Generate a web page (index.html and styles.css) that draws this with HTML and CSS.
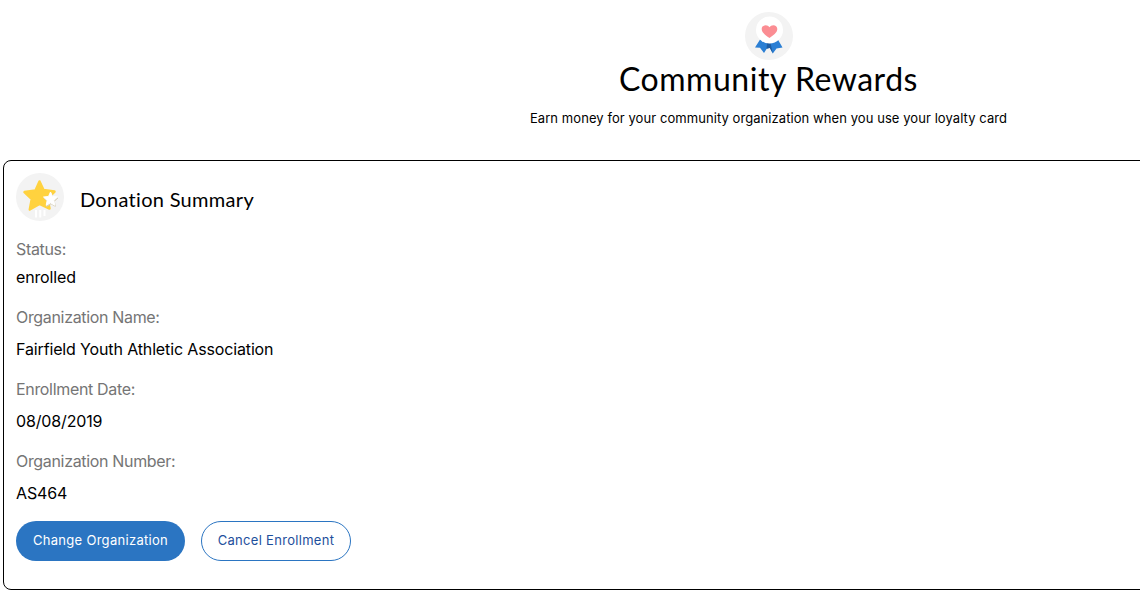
FILE: index.html
```html
<!DOCTYPE html>
<html lang="en">
<head>
<meta charset="utf-8">
<title>Community Rewards</title>
<link rel="stylesheet" href="styles.css">
</head>
<body>
<header class="hero">
  <svg class="badge" width="48" height="48" viewBox="0 0 48 48" aria-hidden="true">
    <circle cx="24" cy="24" r="24" fill="#f3f3f3"/>
    <path d="M16 26 L10 35.500 L15 35.800 L19 41 L22.500 35.500 L24.800 35.500 L27.800 41.500 L31.500 36.500 L37.500 35.500 L32 26 Z" fill="#2b7fd4"/>
    <path d="M22 31 L25.500 31 L27.800 41.500 L24.800 36 L21.500 37 Z" fill="#1d5ca3"/>
    <circle cx="24.500" cy="18" r="13.500" fill="#fff"/>
    <path d="M24.500 26 C21 23.500 16.700 20.800 16.700 17 C16.700 14.800 18.500 13.200 20.700 13.200 C22.300 13.200 23.700 14 24.500 15.300 C25.300 14 26.700 13.200 28.300 13.200 C30.500 13.200 32.300 14.800 32.300 17 C32.300 20.800 28 23.500 24.500 26 Z" fill="#fb8d93"/>
  </svg>
  <h1 class="hero-title">Community Rewards</h1>
  <p class="hero-sub">Earn money for your community organization when you use your loyalty card</p>
</header>
<section class="card">
  <div class="card-head">
    <svg class="badge" width="48" height="48" viewBox="0 0 48 48" aria-hidden="true">
      <circle cx="24" cy="24" r="24" fill="#f3f3f3"/>
      <path d="M20 37 V44.500 M24.300 37 V44.500 M28.500 37 V43" stroke="#fff" stroke-width="2" fill="none"/>
      <path d="M23.500 8.500 L27.500 17 L38.500 18.500 L31.500 25.500 L33.500 35.500 L23.500 30.800 L13.800 36.500 L15.800 26 L8.500 19 L19.500 17.500 Z" fill="#ffd23f" stroke="#ffd23f" stroke-width="2.500" stroke-linejoin="round"/>
      <path d="M35 20 L37 24.500 L42 25 L38.300 28.300 L39.300 33.300 L35 30.800 L30.700 33.300 L31.700 28.300 L28 25 L33 24.500 Z" fill="#d9d2bd" stroke="#d9d2bd" stroke-linejoin="round"/>
      <path d="M34.500 19 L36.500 23.500 L41.500 24 L37.800 27.300 L38.800 32.300 L34.500 29.800 L30.200 32.300 L31.200 27.300 L27.500 24 L32.500 23.500 Z" fill="#fff" stroke="#fff" stroke-linejoin="round"/>
    </svg>
    <h2 class="card-title">Donation Summary</h2>
  </div>
  <dl class="fields">
    <dt class="label">Status:</dt>
    <dd class="value value-first">enrolled</dd>
    <dt class="label">Organization Name:</dt>
    <dd class="value">Fairfield Youth Athletic Association</dd>
    <dt class="label">Enrollment Date:</dt>
    <dd class="value">08/08/2019</dd>
    <dt class="label">Organization Number:</dt>
    <dd class="value">AS464</dd>
  </dl>
  <div class="actions">
    <button class="btn btn-primary" type="button">Change Organization</button>
    <button class="btn btn-outline" type="button">Cancel Enrollment</button>
  </div>
</section>
</body>
</html>
```
FILE: styles.css
```css
html, body {
  margin: 0;
  padding: 0;
  height: 616px;
  overflow: hidden;
  background: #fff;
  font-family: Inter, "Liberation Sans", sans-serif;
  color: #000;
}
.hero {
  display: flex;
  flex-direction: column;
  align-items: center;
  box-sizing: border-box;
  height: 160px;
  padding: 12px 0 0 397px;
}
.badge {
  display: block;
  flex: none;
}
.hero-title {
  margin: -1px 0 0;
  font-family: Lato, "Noto Sans", sans-serif;
  font-size: 32px;
  font-weight: 400;
  line-height: 40px;
  letter-spacing: 0.53px;
  font-variant-ligatures: none;
}
.hero-sub {
  margin: 9px 0 0;
  font-size: 13px;
  line-height: 20px;
  letter-spacing: 0.07px;
}
.card {
  box-sizing: border-box;
  width: 1240px;
  height: 430px;
  margin-left: 3px;
  padding: 12px;
  border: 1px solid #000;
  border-radius: 8px;
}
.card-head {
  display: flex;
  align-items: center;
  gap: 16px;
}
.card-title {
  margin: 4px 0 0;
  font-family: Lato, "Noto Sans", sans-serif;
  font-size: 20px;
  font-weight: 400;
  line-height: 28px;
  letter-spacing: 0.3px;
  font-variant-ligatures: none;
}
.fields {
  margin: 0;
}
.label {
  margin-top: 16px;
  font-size: 16px;
  line-height: 24px;
  letter-spacing: -0.33px;
  color: #757575;
}
.value {
  margin: 8px 0 0;
  font-size: 16px;
  line-height: 24px;
  letter-spacing: -0.14px;
}
.value-first {
  margin-top: 4px;
}
.actions {
  display: flex;
  gap: 16px;
  margin-top: 16px;
}
.btn {
  box-sizing: border-box;
  height: 40px;
  padding: 0 0 2px;
  border-radius: 20px;
  font-family: Inter, "Liberation Sans", sans-serif;
  font-size: 13px;
  font-weight: 400;
  letter-spacing: 0.3px;
}
.btn-primary {
  width: 169px;
  border: 0;
  background: #2b75c2;
  color: #fff;
}
.btn-outline {
  width: 150px;
  border: 1px solid #2b75c2;
  background: #fff;
  color: #1e4f9c;
}
```
